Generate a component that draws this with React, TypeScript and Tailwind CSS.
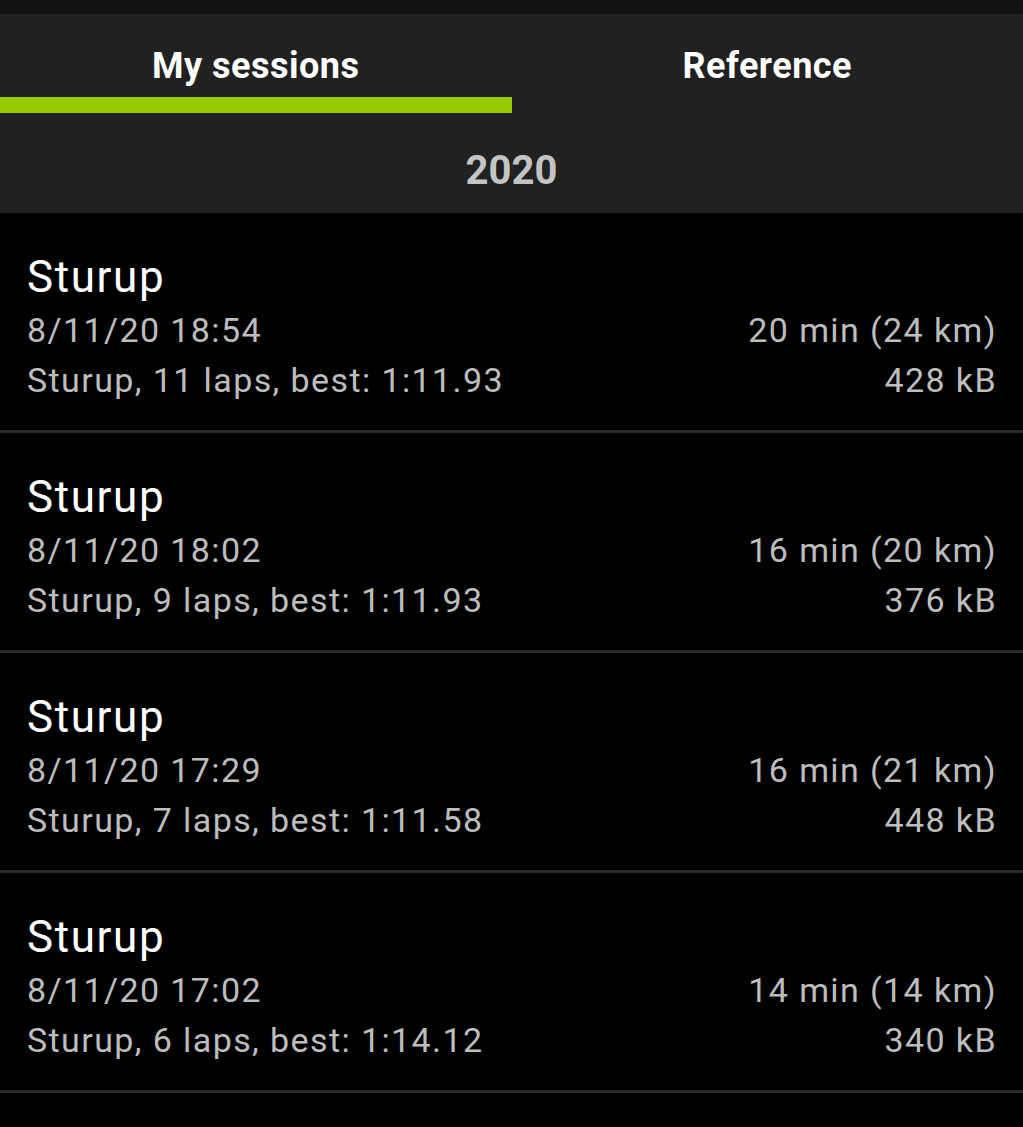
const sessions = [
  { time: "8/11/20 18:54", laps: 11, best: "1:11.93", dur: "20 min (24 km)", size: "428 kB" },
  { time: "8/11/20 18:02", laps: 9, best: "1:11.93", dur: "16 min (20 km)", size: "376 kB" },
  { time: "8/11/20 17:29", laps: 7, best: "1:11.58", dur: "16 min (21 km)", size: "448 kB" },
  { time: "8/11/20 17:02", laps: 6, best: "1:14.12", dur: "14 min (14 km)", size: "340 kB" },
];

type Session = (typeof sessions)[number];

const SessionRow = ({ s }: { s: Session }) => (
  <li className="border-b-[3px] border-[#2a2a2a] pl-[27px] pr-[26px] pt-[36px] pb-[25px]">
    <div className="text-[44px] leading-[56px] tracking-[1.6px] text-white">Sturup</div>
    <div className="flex justify-between text-[34px] leading-[50px] tracking-[1.4px] text-[#bdbdbd]">
      <span>{s.time}</span>
      <span>{s.dur}</span>
    </div>
    <div className="flex justify-between text-[34px] leading-[50px] tracking-[1.4px] text-[#bdbdbd]">
      <span>
        Sturup, {s.laps} laps, best: {s.best}
      </span>
      <span>{s.size}</span>
    </div>
  </li>
);

export default function App() {
  return (
    <div className="min-h-[1127px] w-full bg-black font-['Roboto',sans-serif] overflow-hidden">
      <div className="h-[14px] bg-[#121212]" />
      <div className="flex bg-[#212121]">
        <div className="flex-1 flex flex-col items-center">
          <div className="h-[83px] pt-[20px] flex items-center text-[36px] tracking-[0.5px] font-bold text-white">
            My sessions
          </div>
          <div className="h-[16px] w-full bg-[#99cc00]" />
        </div>
        <div className="flex-1 flex flex-col items-center">
          <div className="h-[83px] pt-[20px] flex items-center text-[36px] tracking-[0.5px] font-bold text-white">
            Reference
          </div>
          <div className="h-[16px] w-full" />
        </div>
      </div>
      <div className="h-[100px] pt-[16px] flex items-center justify-center bg-[#212121] text-[40px] font-bold text-[#c4c4c4]">
        2020
      </div>
      <ul>
        {sessions.map((s) => (
          <SessionRow key={s.time} s={s} />
        ))}
      </ul>
    </div>
  );
}
